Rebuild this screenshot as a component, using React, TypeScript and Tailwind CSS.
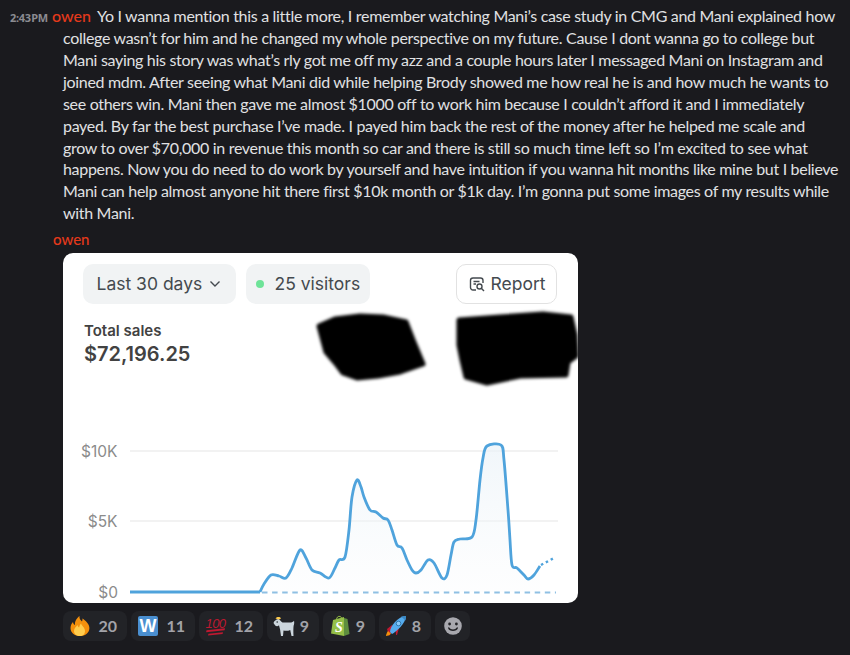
import React from "react";

const lines = [
  "college wasn’t for him and he changed my whole perspective on my future. Cause I dont wanna go to college but",
  "Mani saying his story was what’s rly got me off my azz and a couple hours later I messaged Mani on Instagram and",
  "joined mdm. After seeing what Mani did while helping Brody showed me how real he is and how much he wants to",
  "see others win. Mani then gave me almost $1000 off to work him because I couldn’t afford it and I immediately",
  "payed. By far the best purchase I’ve made. I payed him back the rest of the money after he helped me scale and",
  "grow to over $70,000 in revenue this month so car and there is still so much time left so I’m excited to see what",
  "happens. Now you do need to do work by yourself and have intuition if you wanna hit months like mine but I believe",
  "Mani can help almost anyone hit there first $10k month or $1k day. I’m gonna put some images of my results while",
  "with Mani.",
];

const pts: [number, number][] = [
  [260, 592], [264, 584], [271, 575], [279, 576], [286, 578], [292, 568], [300, 550], [306, 558], [312, 570], [320, 573],
  [329, 578], [335, 568], [339, 560], [345, 557], [349, 530], [352, 497], [357, 480], [361, 487], [364, 497], [370, 510],
  [376, 512], [383, 518], [388, 520], [392, 530], [397, 545], [402, 548], [407, 560], [412, 570], [416, 573], [421, 570],
  [428, 560], [434, 563], [442, 578], [447, 575], [451, 555], [454, 542], [460, 539], [472, 537], [476, 520], [480, 480],
  [483, 458], [487, 446], [501, 445], [504, 460], [508, 510], [510, 540], [512, 565], [517, 568], [524, 575], [528, 579],
  [534, 575], [540, 566],
];

function smooth(p: [number, number][]) {
  let d = `M${p[0][0]} ${p[0][1]}`;
  for (let i = 0; i < p.length - 1; i++) {
    const a = p[Math.max(0, i - 1)], b = p[i], c = p[i + 1], e = p[Math.min(p.length - 1, i + 2)];
    const k = 0.16;
    d += ` C${(b[0] + (c[0] - a[0]) * k).toFixed(1)} ${(b[1] + (c[1] - a[1]) * k).toFixed(1)} ${(c[0] - (e[0] - b[0]) * k).toFixed(1)} ${(c[1] - (e[1] - b[1]) * k).toFixed(1)} ${c[0]} ${c[1]}`;
  }
  return d;
}

function Chart() {
  const curve = smooth(pts);
  return (
    <svg width="515" height="180" viewBox="63 423 515 180" className="block mt-auto">
      <defs>
        <linearGradient id="fill" x1="0" y1="0" x2="0" y2="1">
          <stop offset="0" stopColor="#eaf2f8" stopOpacity="0.7" />
          <stop offset="1" stopColor="#f6f9fb" stopOpacity="0.2" />
        </linearGradient>
      </defs>
      <line x1="130" x2="558" y1="451" y2="451" stroke="#e6e6e6" strokeWidth="1.2" />
      <line x1="130" x2="558" y1="521" y2="521" stroke="#e6e6e6" strokeWidth="1.2" />
      <path d={`${curve} L540 592 L260 592 Z`} fill="url(#fill)" />
      <line x1="262" x2="556" y1="592.5" y2="592.5" stroke="#8fc0e3" strokeWidth="2" strokeDasharray="5.5 4.6" />
      <line x1="130" x2="260" y1="592" y2="592" stroke="#4fa3dc" strokeWidth="2.8" />
      <path d={curve} fill="none" stroke="#4fa3dc" strokeWidth="2.8" strokeLinejoin="round" />
      <path d="M541 565 L554 558" fill="none" stroke="#4fa3dc" strokeWidth="2.4" strokeDasharray="2.5 3" />
      <g fontFamily="Inter, sans-serif" fontSize="15.5" fill="#8b8b8b" textAnchor="end">
        <text x="117.5" y="456.500">$10K</text>
        <text x="117.5" y="526.500">$5K</text>
        <text x="118" y="597.500">$0</text>
      </g>
    </svg>
  );
}

function Redactions() {
  return (
    <svg width="280" height="90" viewBox="305 305 280 90" className="absolute left-[242px] top-[52px]">
      <defs>
        <filter id="b" x="-10%" y="-10%" width="120%" height="120%">
          <feGaussianBlur stdDeviation="1.8" />
        </filter>
      </defs>
      <g filter="url(#b)" fill="#000" stroke="#000" strokeWidth="5" strokeLinejoin="round">
        <path d="M319 326 L335 319 L360 316 L383 317 L406 322 L413 340 L423 364 L400 372 L378 376 L357 378 L343 373 L337 365 L326 352 Z" />
        <path d="M459 320 L500 317 L543 314 L571 317 L575 335 L576 356 L568 362 L566 375 L520 376 L487 383 L466 377 L462 360 L459 345 Z" />
      </g>
    </svg>
  );
}

function Flame() {
  return (
    <svg width="22" height="22" viewBox="0 0 22 22">
      <path d="M11 21c-5.500 0-9.500-3.500-9.500-8 0-3 1.500-5 2.500-6 .2 1.500 .8 2.500 2 3C5.500 6 8 3 10.500 1c-.3 2.500 .8 4 2.500 5.500 .5-1 .6-2 .4-3 3 2 7 5.500 7 9.500 0 4.500-4 8-9.400 8z" fill="#f4900c" />
      <path d="M11 21c-3.500 0-6-2-6-5 0-2.500 1.800-4 3.500-6 .2 1.200 .8 2 1.600 2.500 .3-1.500 1-3 2-4 .2 2 3.900 4 3.900 7.500 0 3-2 5-5 5z" fill="#ffcc4d" />
    </svg>
  );
}

function Word() {
  return (
    <div className="w-5 h-5 rounded-[2px] bg-[#4a8fd0] flex items-center justify-center text-white font-bold text-[18px] leading-none font-['Liberation_Sans',sans-serif]">
      W
    </div>
  );
}

function Hundred() {
  return (
    <svg width="22" height="20" viewBox="0 0 22 20">
      <text x="0.500" y="11.500" fontFamily="'Liberation Sans', sans-serif" fontSize="13" fontWeight="400" fontStyle="italic" fill="#be1931" textLength="20.500">100</text>
      <path d="M1.500 14.300 L20 12.300 L19.600 14.200 L1.100 16.200 Z" fill="#be1931" />
      <path d="M3.500 17.800 L18 16.200 L17.600 18 L3 19.600 Z" fill="#be1931" />
    </svg>
  );
}

function Goat() {
  return (
    <svg width="22" height="21" viewBox="0 0 22 21">
      <path d="M5.500 3c1.500 .5 2.500 3 4 3.500h7.500c1.800 0 3.300-.6 4-1.800 .4 1.800 .2 3.600-.4 5-.3 2.500-.3 6-.1 10.300h-2l-1.300-6c-2 1-4.500 1.100-6.700 .5l-.5 5.500H8l-.9-6.500C6.500 11.500 6.300 10.500 6 9.300 5 10.500 3.500 10.500 2.500 9.800 2 8.800 1 8 .5 7 1 5 3 3.500 5.500 3z" fill="#ccd6dd" />
      <path d="M2.500 2.400 C4 .6 7 .4 8 2.400 L6 3.400 C5 3 3.500 3 2.500 2.400z" fill="#ffcc4d" />
      <circle cx="4.200" cy="6" r=".8" fill="#292f33" />
    </svg>
  );
}

function Shopify() {
  return (
    <svg width="20" height="22" viewBox="0 0 20 22">
      <path d="M14 3 L17.500 4 L19.500 19 L14 21z" fill="#5e8e3e" />
      <path d="M1 18.500 L3 5 L14 2 L14 21 Z" fill="#95bf47" />
      <path d="M6.500 5 C6.500 2 8.500 .8 10 1.500 C11.500 2 11.800 3 11.800 4" fill="none" stroke="#95bf47" strokeWidth="1" />
      <text x="5" y="16.500" fontFamily="'Liberation Serif', serif" fontStyle="italic" fontWeight="700" fontSize="14" fill="#fff">S</text>
    </svg>
  );
}

function Rocket() {
  return (
    <svg width="22" height="22" viewBox="0 0 22 22">
      <path d="M2 14 L7 10 L9 13 L4 21 Z" fill="#be1931" />
      <path d="M11 20 L10.500 13 L14 13 L12 20z" fill="#be1931" />
      <path d="M3 16c-1.500 2-2 4-2 5 1.500 0 3.500-.5 5-2.200z" fill="#f4900c" />
      <path d="M5 17 C5 11 13 1.500 21 1 C21 8 11 17 7 19 Z" fill="#55acee" />
      <path d="M16 1.600 C18 1 20 .8 21 1 C21.200 2.500 21 4 20.500 5.500z" fill="#3b88c3" />
      <circle cx="13.500" cy="8.500" r="2.300" fill="#88c9f9" stroke="#226699" strokeWidth=".8" />
    </svg>
  );
}

function Smile() {
  return (
    <svg width="18" height="18" viewBox="0 0 18 18">
      <circle cx="9" cy="9" r="8.800" fill="#a8a8ae" />
      <circle cx="5.600" cy="7" r="1.400" fill="#232327" />
      <circle cx="12.400" cy="7" r="1.400" fill="#232327" />
      <path d="M4.800 11 C6 14 12 14 13.200 11" fill="none" stroke="#232327" strokeWidth="1.500" strokeLinecap="round" />
    </svg>
  );
}

function Reaction({ icon, count, className }: { icon: React.ReactNode; count: string; className: string }) {
  return (
    <div className={`h-[30px] rounded-lg bg-[#222327] flex items-center pl-[6px] ${className}`}>
      <div className="w-[22px] h-[22px] flex items-center justify-center">{icon}</div>
      <span className="ml-auto mr-[10px] text-[16px] font-bold text-[#a3a3a9]">{count}</span>
    </div>
  );
}

export default function App() {
  return (
    <div className="w-[850px] h-[655px] overflow-hidden bg-[#1a1a1e] text-[#e0e1e3] font-['Lato',sans-serif]">
      <div className="pt-[5px] pl-[10px] text-[16px] leading-[21.9px]">
        <div className="flex items-baseline h-[22px]">
          <span className="w-[42px] shrink-0 text-[11px] font-bold text-[#8b8b91] [word-spacing:-2px] font-['Noto_Sans',sans-serif] tracking-[-0.3px]">2:43 PM</span>
          <span className="w-[45px] shrink-0 text-[#e5391b] font-medium">owen</span>
          <span className="whitespace-nowrap tracking-[-0.31px]">Yo I wanna mention this a little more, I remember watching Mani’s case study in CMG and Mani explained how</span>
        </div>
        <div className="pl-[53px] whitespace-nowrap tracking-[-0.31px]">
          {lines.map((l) => (
            <div key={l}>{l}</div>
          ))}
        </div>
        <div className="pl-[43px] mt-[4px] text-[#e5391b] text-[15px] leading-[22px] font-medium">owen</div>
      </div>
      <div className="ml-[63px] mt-[3px] w-[515px] h-[350px] bg-white rounded-[10px] relative flex flex-col overflow-hidden font-['Inter',sans-serif]">
        <div className="flex pt-[11px] pl-[20px] pr-[21px] gap-[10px]">
          <div className="w-[153px] h-[40px] rounded-[10px] bg-[#f1f3f4] flex items-center pl-[13.5px] text-[17.500px] text-[#444a4f]">
            Last 30 days
            <svg width="12" height="8" viewBox="0 0 12 8" className="ml-[7px]">
              <path d="M1.500 1.500 L6 6 L10.500 1.500" fill="none" stroke="#444a4f" strokeWidth="1.400" />
            </svg>
          </div>
          <div className="w-[124px] h-[40px] rounded-[10px] bg-[#f1f3f4] flex items-center pl-[10px] text-[17.500px] text-[#444a4f]">
            <span className="w-[8px] h-[8px] rounded-full bg-[#6ee398] mr-[10.500px]" />
            25 visitors
          </div>
          <div className="ml-auto w-[101px] h-[40px] rounded-[10px] border border-[#e2e2e2] flex items-center pl-[12px] text-[17.500px] text-[#444a4f]">
            <svg width="16" height="16" viewBox="0 0 16 16" className="mr-[5.500px]">
              <path d="M7 14H4a2.500 2.500 0 0 1-2.500-2.500v-7A2.500 2.500 0 0 1 4 2h7.500A2.500 2.500 0 0 1 14 4.500V7" fill="none" stroke="#444a4f" strokeWidth="1.400" />
              <path d="M4.500 5.500h6M4.500 8h2.500" stroke="#444a4f" strokeWidth="1.300" />
              <circle cx="10.500" cy="10.500" r="2.500" fill="none" stroke="#444a4f" strokeWidth="1.400" />
              <path d="M12.500 12.500L15 15" stroke="#444a4f" strokeWidth="1.400" />
            </svg>
            Report
          </div>
        </div>
        <div className="pl-[21px] pt-[17px] text-[#424242] font-semibold">
          <div className="text-[15px] leading-[20px]">Total sales</div>
          <div className="text-[20px] leading-[26px]">$72,196.25</div>
        </div>
        <Redactions />
        <Chart />
      </div>
      <div className="ml-[63px] mt-[8px] flex gap-[4px]">
        <Reaction icon={<Flame />} count="20" className="w-[64px]" />
        <Reaction icon={<Word />} count="11" className="w-[64px]" />
        <Reaction icon={<Hundred />} count="12" className="w-[64px]" />
        <Reaction icon={<Goat />} count="9" className="w-[52px]" />
        <Reaction icon={<Shopify />} count="9" className="w-[52px]" />
        <Reaction icon={<Rocket />} count="8" className="w-[52px]" />
        <div className="h-[30px] w-[35px] rounded-lg bg-[#222327] flex items-center justify-center">
          <Smile />
        </div>
      </div>
    </div>
  );
}
